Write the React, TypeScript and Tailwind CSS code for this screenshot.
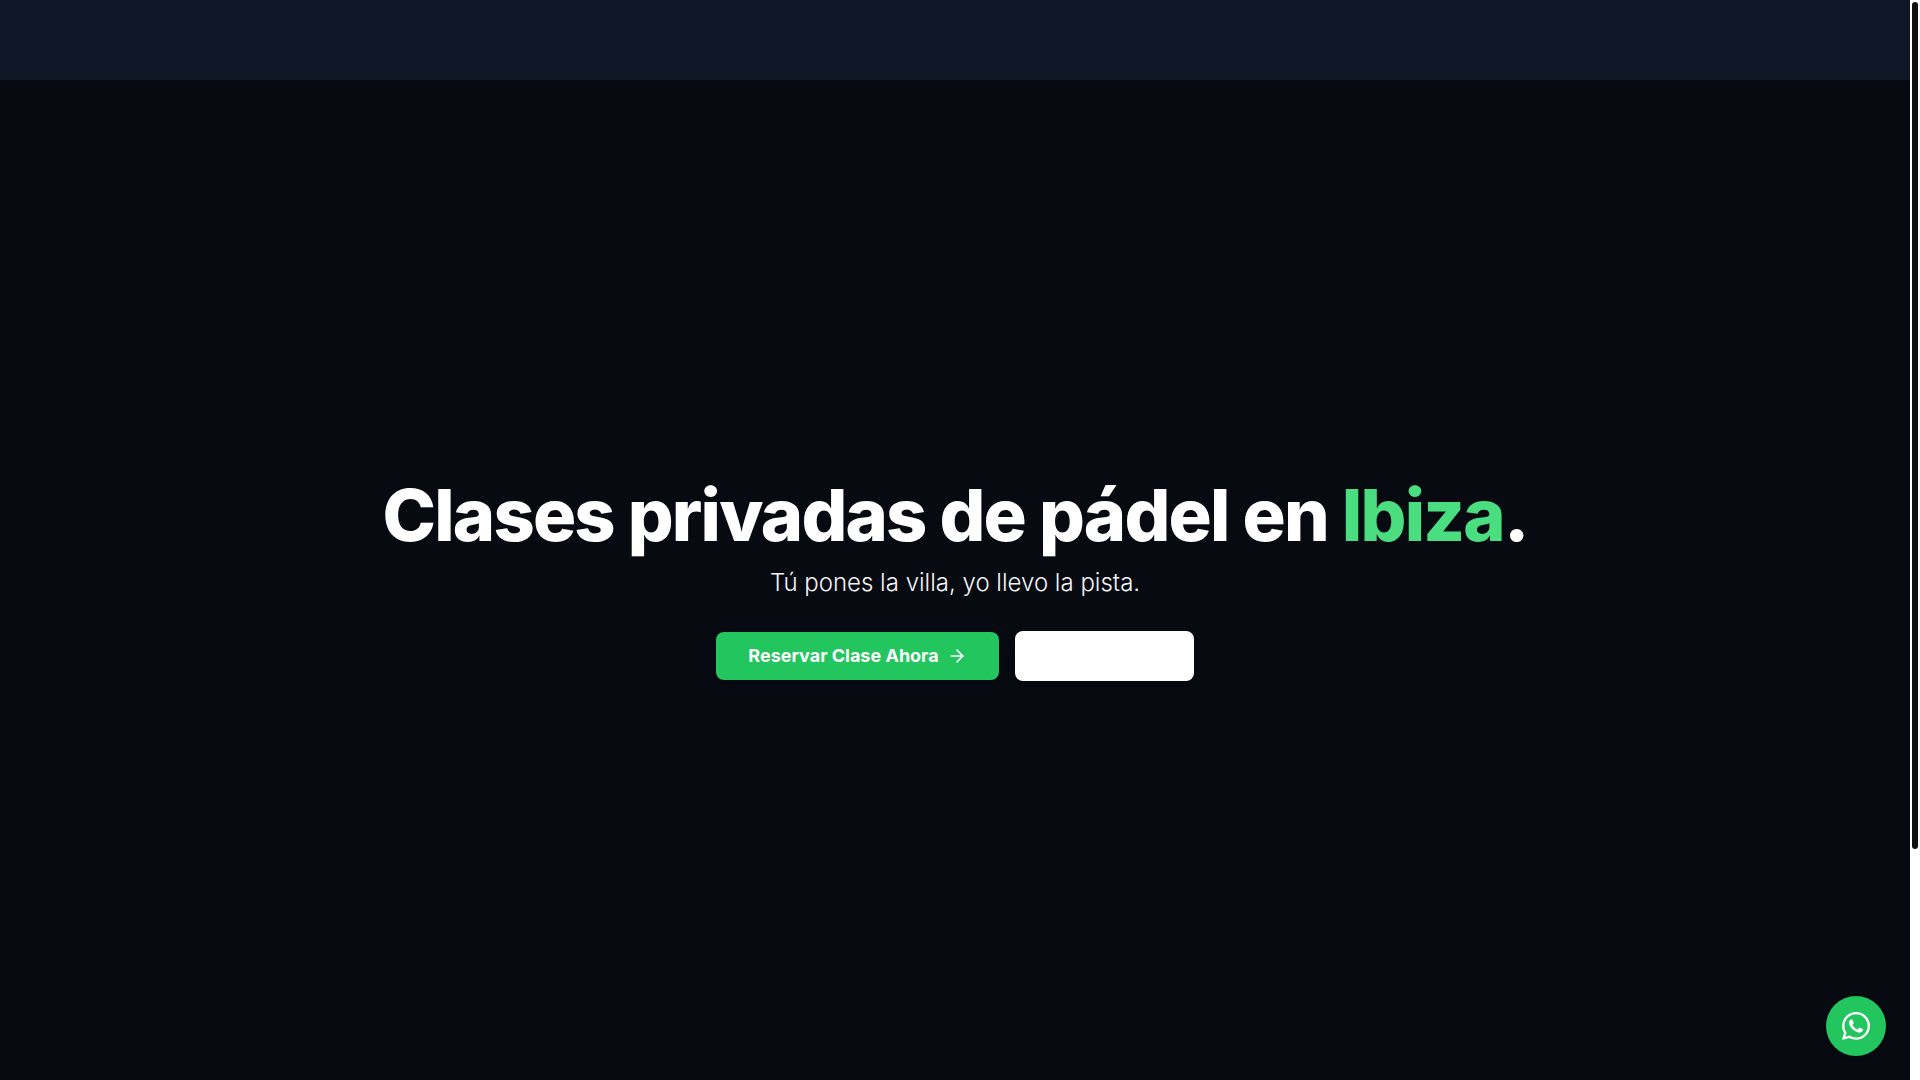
import React from "react";
import { ArrowRight } from "lucide-react";
import { FaWhatsapp } from "react-icons/fa";

const Hero = () => {
  return (
    <section className="flex-1 flex flex-col items-center justify-center px-4 text-center">
      <h1 className="text-7xl leading-none font-extrabold tracking-tight text-white">
        Clases privadas de pádel en{" "}
        <span className="text-[#4ade80]">Ibiza</span>.
      </h1>
      <p className="mt-4 text-2xl font-light text-gray-100">
        Tú pones la villa, yo llevo la pista.
      </p>
      <div className="mt-8 flex flex-wrap items-center justify-center gap-4">
        <button className="flex h-12 items-center gap-2 rounded-lg bg-[#22c55e] px-8 text-lg font-bold text-white shadow-lg">
          Reservar Clase Ahora
          <ArrowRight className="h-5 w-5" />
        </button>
        <button
          aria-label="Contactar"
          className="h-[50px] w-[179px] rounded-lg bg-white shadow-lg"
        />
      </div>
    </section>
  );
};

const ScrollTrack = () => {
  return (
    <div className="w-[10px] shrink-0 bg-white px-[2px] pt-[2px]">
      <div className="h-[78.4vh] rounded-full bg-[#111111]" />
    </div>
  );
};

export default function App() {
  return (
    <div className="flex min-h-screen bg-[#070a11] font-['Inter',sans-serif]">
      <div className="relative flex min-w-0 flex-1 flex-col">
        <header className="h-20 bg-[#101726]" />
        <Hero />
        <a
          href="#whatsapp"
          aria-label="WhatsApp"
          className="absolute bottom-6 right-6 flex h-15 w-15 items-center justify-center rounded-full bg-[#22c55e] text-white shadow-lg"
        >
          <FaWhatsapp className="h-8 w-8" />
        </a>
      </div>
      <ScrollTrack />
    </div>
  );
}
